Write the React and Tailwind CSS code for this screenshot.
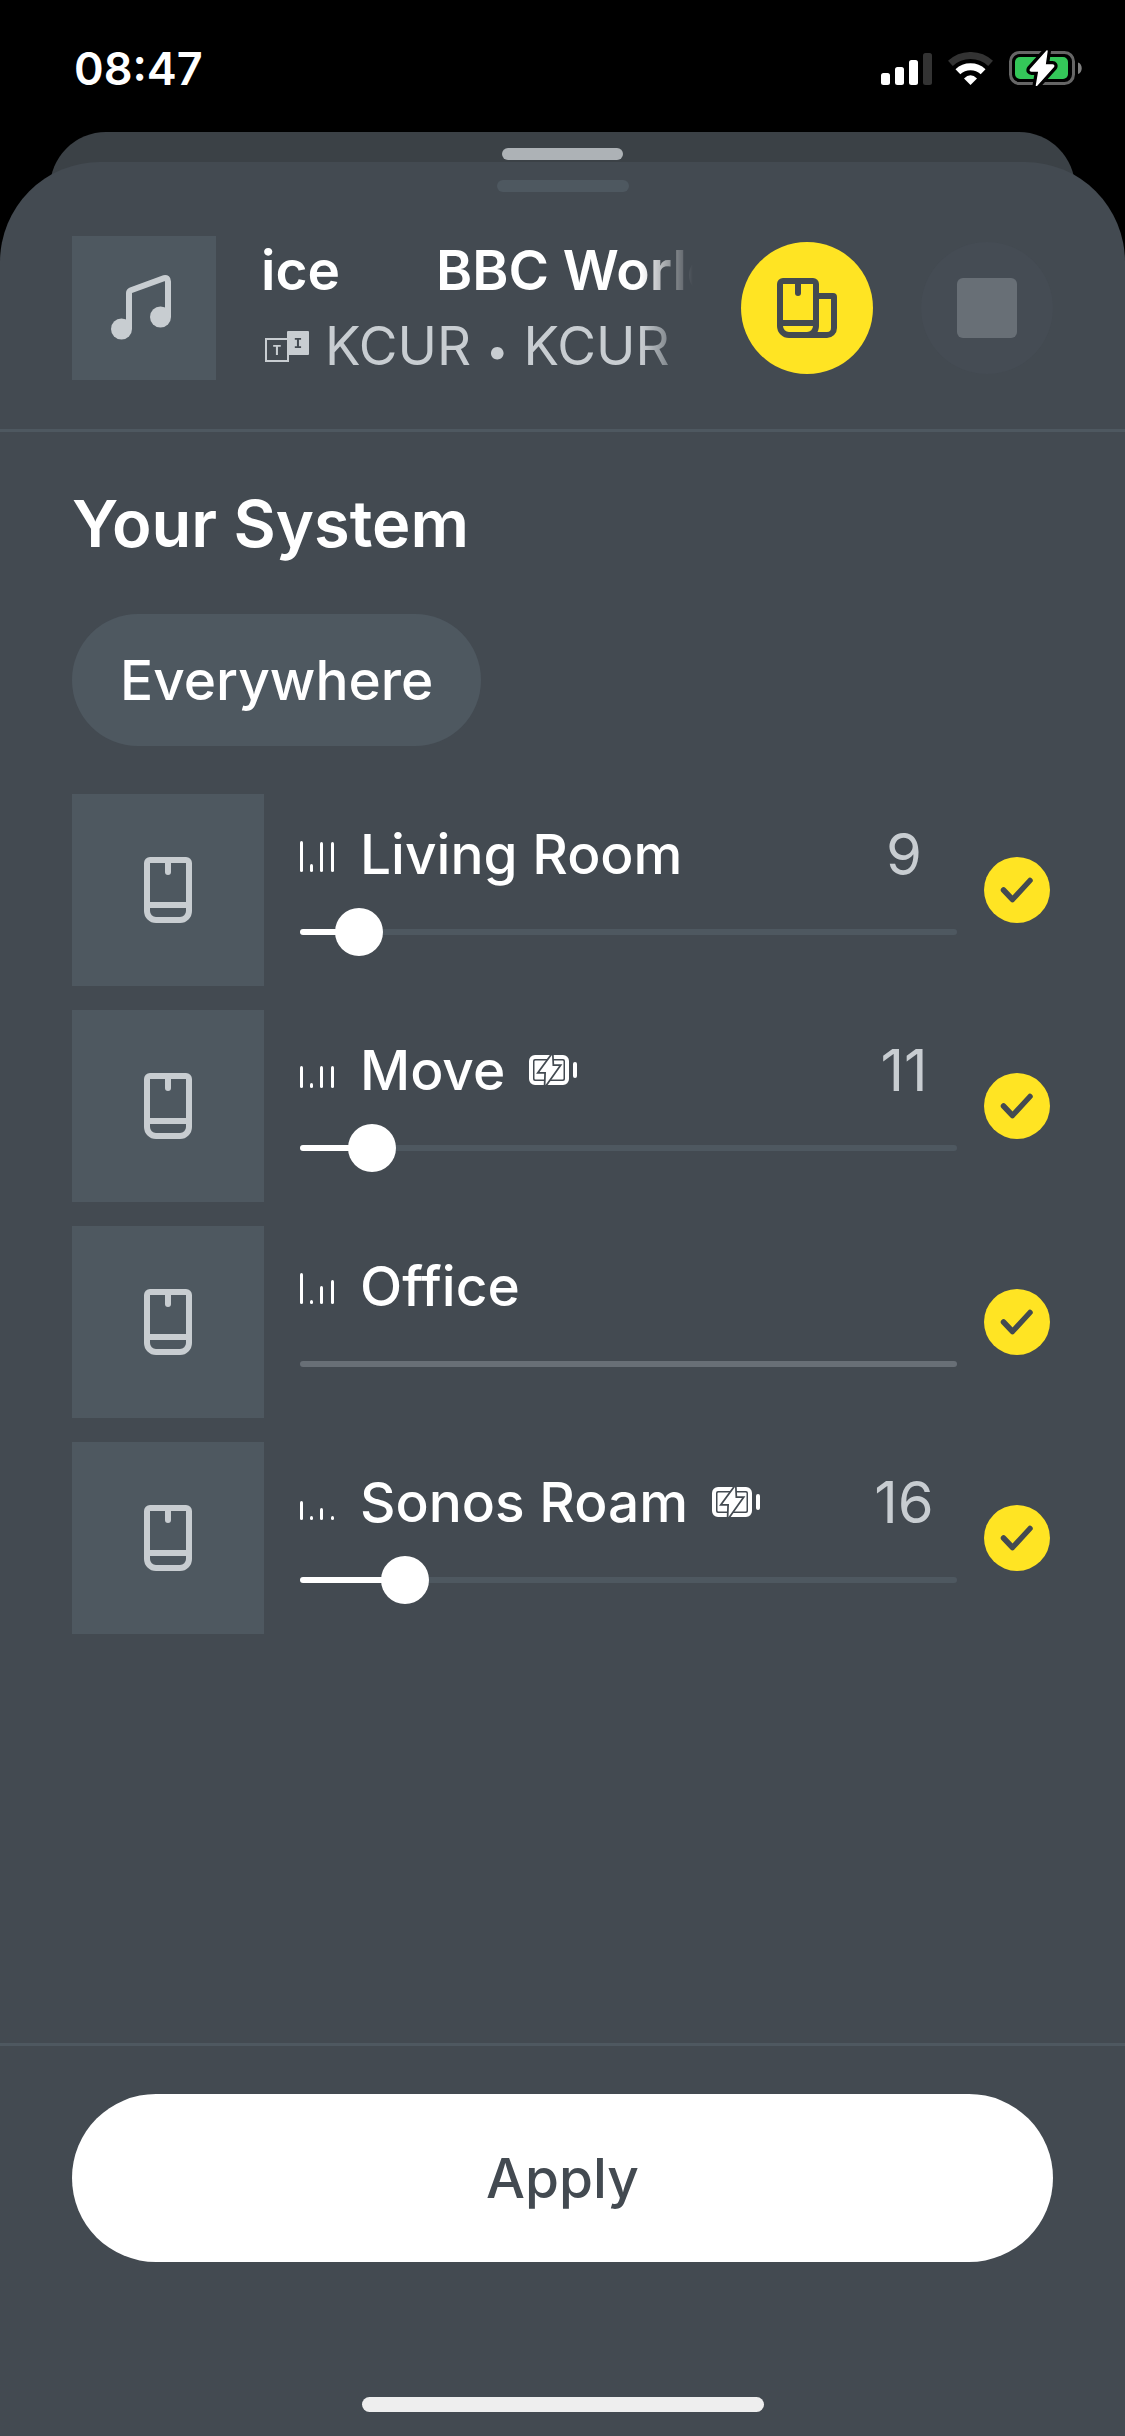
import { useState } from "react";

const ROOMS = [
  { name: "Living Room", volume: 9, bars: [31, 8, 30, 30] },
  { name: "Move", volume: 11, bars: [22, 5, 22, 22], charging: true },
  { name: "Office", volume: null, bars: [31, 4, 18, 24] },
  { name: "Sonos Roam", volume: 16, bars: [19, 4, 12, 4], charging: true },
];

function SignalIcon() {
  return (
    <svg width="51" height="33" viewBox="0 0 51 33" aria-hidden="true">
      <rect x="0" y="21" width="9" height="12" rx="2.5" fill="#fff" />
      <rect x="14" y="15" width="9" height="18" rx="2.5" fill="#fff" />
      <rect x="28" y="8" width="9" height="25" rx="2.5" fill="#fff" />
      <rect x="42" y="1" width="9" height="32" rx="2.5" fill="#333" />
    </svg>
  );
}

function WifiIcon() {
  return (
    <svg width="45" height="33" viewBox="0 0 45 33" aria-hidden="true">
      <path d="M2.4 11.4A29.5 29.5 0 0 1 42.6 11.4" fill="none" stroke="#333" strokeWidth="7" />
      <path d="M9.9 19.7A18.3 18.3 0 0 1 35.1 19.7" fill="none" stroke="#fff" strokeWidth="7" />
      <path d="M22.5 33 16 26.4Q22.5 20 29 26.4Z" fill="#fff" />
    </svg>
  );
}

function PhoneBatteryIcon() {
  const bolt = "M38 1 21.5 19.5Q21 21 22.5 21H30L27.5 35.5 44.5 16.5Q45 15 43.5 15H36Z";
  return (
    <svg width="74" height="36" viewBox="0 0 74 36" aria-hidden="true">
      <rect x="1.5" y="2.5" width="63" height="31" rx="9" fill="none" stroke="#666" strokeWidth="3" />
      <rect x="6" y="7" width="53" height="22" rx="5" fill="#34c759" />
      <path d="M69 12.500c5 1.500 5 10 0 11.500Z" fill="#808080" />
      <path d={bolt} fill="#000" stroke="#000" strokeWidth="8" strokeLinejoin="round" />
      <path d={bolt} fill="#fff" stroke="#fff" strokeWidth="1.500" strokeLinejoin="round" />
    </svg>
  );
}

function NoteIcon() {
  return (
    <svg width="66" height="66" viewBox="0 0 66 66" aria-hidden="true">
      <circle cx="10.500" cy="54" r="10.500" fill="#c8cdd1" />
      <circle cx="49.500" cy="42" r="10.500" fill="#c8cdd1" />
      <path
        d="M18 54V18Q18 16 20 15.200L53 3.200Q57 2.500 57 6.500V42"
        fill="none"
        stroke="#c8cdd1"
        strokeWidth="6"
      />
    </svg>
  );
}

function TuneInIcon() {
  return (
    <svg width="48" height="33" viewBox="0 0 48 33" className="shrink-0" role="img" aria-label="TuneIn">
      <rect x="5" y="9" width="22" height="22" fill="none" stroke="#c8cdd1" strokeWidth="2" />
      <rect x="26" y="1" width="22" height="24" rx="1" fill="#c8cdd1" />
      <text x="16" y="25" textAnchor="middle" className="text-[14px] font-bold" fontFamily="Liberation Mono, monospace" fill="#c8cdd1">T</text>
      <text x="37" y="18" textAnchor="middle" className="text-[14px] font-bold" fontFamily="Liberation Mono, monospace" fill="#434a51">I</text>
    </svg>
  );
}

function GroupIcon() {
  return (
    <svg width="60" height="60" viewBox="0 0 60 60" fill="none" stroke="#434a51" strokeWidth="6" aria-hidden="true">
      <path d="M6 3H36a3 3 0 0 1 3 3V48a9 9 0 0 1-9 9H12a9 9 0 0 1-9-9V6a3 3 0 0 1 3-3Z" />
      <path d="M3 45H39" />
      <path d="M21 3V15" strokeLinecap="round" />
      <path d="M39 18H56Q57 18 57 19V50a7 7 0 0 1-7 7H30" />
    </svg>
  );
}

function SpeakerIcon() {
  return (
    <svg width="48" height="66" viewBox="0 0 48 66" fill="none" stroke="#c8cdd1" strokeWidth="6" aria-hidden="true">
      <path d="M6 3H42a3 3 0 0 1 3 3V54a9 9 0 0 1-9 9H12a9 9 0 0 1-9-9V6a3 3 0 0 1 3-3Z" />
      <path d="M3 48H45" />
      <path d="M24 3V15" strokeLinecap="round" />
    </svg>
  );
}

function ChargingIcon() {
  const bolt = "M23 0 10.500 17H17L16.500 30 30 11H23.500Z";
  return (
    <svg width="48" height="30" viewBox="0 0 48 30" className="shrink-0" role="img" aria-label="Charging">
      <rect x="2" y="2" width="36" height="26" rx="4" fill="none" stroke="#fff" strokeWidth="4" />
      <rect x="5.500" y="5.500" width="29" height="19" rx="1" fill="#fff" />
      <path d={bolt} fill="none" stroke="#434a51" strokeWidth="3.500" />
      <path d={bolt} fill="#fff" />
      <rect x="44" y="7" width="4" height="16" rx="2" fill="#fff" />
    </svg>
  );
}

function LevelBars({ bars }) {
  return (
    <svg width="36" height="36" viewBox="0 0 36 36" className="shrink-0" aria-hidden="true">
      {bars.map((h, i) => (
        <rect key={i} x={[0, 10, 20, 31][i]} y={36 - h} width="3" height={h} rx="1.500" fill="#fff" />
      ))}
    </svg>
  );
}

function VolumeSlider({ label, value, onChange }) {
  if (value === null) {
    return (
      <div className="mt-[18px] flex h-12 items-center">
        <div className="h-1.5 w-full rounded-full bg-[#686f76]" />
      </div>
    );
  }
  return (
    <div className="relative mt-[18px] flex h-12 items-center">
      <div className="h-1.5 w-full overflow-hidden rounded-full bg-[#4e5860]">
        <div className="h-full bg-white" style={{ width: `${value}%` }} />
      </div>
      <input
        type="range"
        min="0"
        max="100"
        value={value}
        onChange={(e) => onChange(Number(e.target.value))}
        aria-label={`${label} volume`}
        className="absolute -inset-x-6 inset-y-0 m-0 h-12 cursor-pointer appearance-none bg-transparent [&::-webkit-slider-thumb]:size-12 [&::-webkit-slider-thumb]:appearance-none [&::-webkit-slider-thumb]:rounded-full [&::-webkit-slider-thumb]:bg-white"
      />
    </div>
  );
}

function RoomRow({ room }) {
  const [volume, setVolume] = useState(room.volume);
  const [checked, setChecked] = useState(true);
  return (
    <li className="flex h-48 items-center">
      <div className="grid size-48 shrink-0 place-items-center bg-[#4e5860]">
        <SpeakerIcon />
      </div>
      <div className="ml-9 h-full min-w-0 flex-1 pt-6">
        <div className="flex h-[72px] items-center">
          <LevelBars bars={room.bars} />
          <span className="ml-6 text-[55px] leading-[72px] font-medium whitespace-nowrap text-white">{room.name}</span>
          {room.charging && (
            <span className="ml-6">
              <ChargingIcon />
            </span>
          )}
          <span className="ml-auto w-[106px] text-center text-[58px] leading-[72px] text-[#c8cdd1]">{volume}</span>
        </div>
        <VolumeSlider label={room.name} value={volume} onChange={setVolume} />
      </div>
      <label className="relative ml-6 grid size-[72px] shrink-0 cursor-pointer place-items-center">
        <input
          type="checkbox"
          checked={checked}
          onChange={() => setChecked(!checked)}
          aria-label={room.name}
          className="peer size-[66px] appearance-none rounded-full border-[6px] border-[#4e5860] checked:border-0 checked:bg-[#ffe423]"
        />
        <svg
          width="34"
          height="28"
          viewBox="0 0 34 28"
          fill="none"
          stroke="#434a51"
          strokeWidth="5.500"
          strokeLinecap="round"
          strokeLinejoin="round"
          className="pointer-events-none absolute hidden peer-checked:block"
          aria-hidden="true"
        >
          <path d="M3.500 14 12.500 23.500 30 4.500" />
        </svg>
      </label>
    </li>
  );
}

export default function App() {
  return (
    <div className="flex min-h-screen flex-col bg-black font-['Inter','Liberation_Sans',sans-serif] text-white">
      <div className="flex h-[132px] items-center justify-between pt-1 pr-[42px] pl-[74px]">
        <span className="text-[45px] leading-none font-semibold">08:47</span>
        <div className="flex items-center gap-4">
          <SignalIcon />
          <WifiIcon />
          <PhoneBatteryIcon />
        </div>
      </div>

      <div className="mx-[50px] flex h-[60px] justify-center rounded-t-[56px] bg-[#3b4146] pt-4">
        <div className="h-3 w-[121px] rounded-full bg-[#adb2b6]" />
      </div>

      <div className="-mt-[30px] flex flex-1 flex-col rounded-t-[100px] bg-[#434a51]">
        <header className="border-b-[3px] border-[#4e5860] px-[72px] pt-[18px] pb-[49px]">
          <div className="mx-auto h-3 w-[132px] rounded-full bg-[#4e5860]" />
          <div className="mt-11 flex items-center">
            <div className="grid size-36 shrink-0 place-items-center bg-[#4e5860]">
              <NoteIcon />
            </div>
            <div className="-my-1 mr-12 ml-[45px] min-w-0 flex-1 overflow-hidden whitespace-nowrap [mask-image:linear-gradient(to_right,#000_88%,transparent)]">
              <div className="flex gap-24 text-[55px] leading-[76px] font-semibold">
                <span>ice</span>
                <span>BBC World</span>
              </div>
              <div className="flex items-center gap-4 text-[53px] leading-[76px] text-[#c8cdd1]">
                <TuneInIcon />
                <span>
                  KCUR <span className="text-[40px] leading-none">•</span> KCUR
                </span>
              </div>
            </div>
            <button type="button" aria-label="Group rooms" className="grid size-[132px] shrink-0 place-items-center rounded-full bg-[#ffe423]">
              <GroupIcon />
            </button>
            <button type="button" aria-label="Stop" className="ml-12 grid size-[132px] shrink-0 place-items-center rounded-full bg-[#454c54]">
              <span className="size-[60px] rounded-md bg-[#686f76]" />
            </button>
          </div>
        </header>

        <main className="flex-1 px-[72px] pt-[50px]">
          <h1 className="text-[65px] leading-[84px] font-semibold">Your System</h1>
          <button type="button" className="mt-12 h-[132px] rounded-full bg-[#4e5860] px-12 text-[55px] font-medium">
            Everywhere
          </button>
          <ul className="mt-12 flex flex-col gap-6">
            {ROOMS.map((room) => (
              <RoomRow key={room.name} room={room} />
            ))}
          </ul>
        </main>

        <footer className="border-t-[3px] border-[#4e5860] px-[72px] pt-12 pb-6">
          <button type="button" className="h-[168px] w-full rounded-full bg-white text-[55px] font-medium text-[#434a51]">
            Apply
          </button>
          <div className="mx-auto mt-[135px] h-[15px] w-[402px] rounded-full bg-[#eeeeee]" />
        </footer>
      </div>
    </div>
  );
}
